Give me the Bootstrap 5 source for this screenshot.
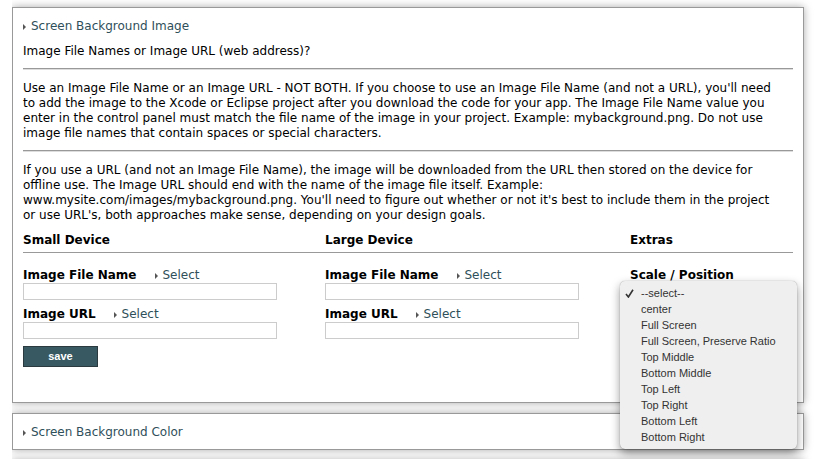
<!DOCTYPE html>
<html lang="en">
<head>
<meta charset="utf-8">
<meta name="viewport" content="width=device-width, initial-scale=1">
<title>Screen Background</title>
<link href="https://cdn.jsdelivr.net/npm/bootstrap@5.3.0/dist/css/bootstrap.min.css" rel="stylesheet">
<style>
body { font-family: "DejaVu Sans", Verdana, sans-serif; font-size: 12px; line-height: 15px; color: #000; background: #fff; }
.page { margin-left: 12px; padding: 7px 12px 0 0; overflow: hidden; height: 100vh; }
.panel { background: #fff; border: 1px solid #999; box-shadow: 0 0 8px #aaa; padding: 11px 10px 9px; margin-bottom: 10px; }
.panel-main { padding-bottom: 35px; }
.toggle { color: #2f4f5a; text-decoration: none; display: inline-flex; align-items: center; gap: 5px; }
.toggle:hover { text-decoration: underline; }
.toggle svg { width: 3px; height: 6px; fill: #555; margin-top: 1px; }
.title-row { margin-bottom: 10px; }
.rule { border: 0; border-top: 1px solid #999; border-bottom: 1px solid #ddd; opacity: 1; height: 2px; background: none; margin: 9px 0 11px; }
.device-grid { display: grid; grid-template-columns: 302fr 305fr 163fr; }
.heads { border-bottom: 1px solid #999; padding-bottom: 4px; margin: 10px 0 15px; }
.field-head { gap: 18px; }
.text-field { display: block; width: 254px; height: 17px; border: 1px solid #ccc; padding: 0 3px; background: #fff; }
.field { margin-bottom: 7px; }
.save { width: 75px; height: 21px; padding: 0; border: 1px solid #2b3a3f; border-radius: 0; background: #395962; color: #fff; font: bold 11px/19px "Liberation Sans", Arial, sans-serif; }
.save:hover { background: #2f4f5a; color: #fff; }
.scale-select { display: block; width: 150px; height: 18px; font-size: 11px; }
.options { position: absolute; z-index: 5; top: 13px; left: -10px; width: 177px; padding: 4px 0; background: #efefef; border-radius: 5px; box-shadow: 0 0 1px rgba(0,0,0,.4), 0 4px 10px rgba(0,0,0,.4); font: 11px/16px "Liberation Sans", Arial, sans-serif; }
.options button { display: block; position: relative; width: 100%; padding: 0 0 0 21px; border: 0; background: none; color: #333; text-align: left; line-height: 16px; }
.options svg { position: absolute; left: 5px; top: 4px; width: 9px; height: 9px; }
</style>
</head>
<body>
<main class="page">
  <section class="panel panel-main position-relative z-1">
    <div class="title-row"><a class="toggle" href="#image"><svg viewBox="0 0 3 6" aria-hidden="true"><path d="M0 0L3 3L0 6Z"/></svg>Screen Background Image</a></div>
    <p class="m-0">Image File Names or Image URL (web address)?</p>
    <hr class="rule">
    <p class="m-0">Use an Image File Name or an Image URL - NOT BOTH. If you choose to use an Image File Name (and not a URL), you'll need<br>to add the image to the Xcode or Eclipse project after you download the code for your app. The Image File Name value you<br>enter in the control panel must match the file name of the image in your project. Example: mybackground.png. Do not use<br>image file names that contain spaces or special characters.</p>
    <hr class="rule">
    <p class="m-0">If you use a URL (and not an Image File Name), the image will be downloaded from the URL then stored on the device for<br>offline use. The Image URL should end with the name of the image file itself. Example:<br>www.mysite.com/images/mybackground.png. You'll need to figure out whether or not it's best to include them in the project<br>or use URL's, both approaches make sense, depending on your design goals.</p>
    <form>
      <div class="device-grid heads fw-bold">
        <div>Small Device</div><div>Large Device</div><div>Extras</div>
      </div>
      <div class="device-grid">
        <div>
          <div class="field">
            <div class="d-flex field-head"><label class="fw-bold" for="sf">Image File Name</label><a class="toggle" href="#sf"><svg viewBox="0 0 3 6" aria-hidden="true"><path d="M0 0L3 3L0 6Z"/></svg>Select</a></div>
            <input class="text-field" id="sf" type="text">
          </div>
          <div class="field">
            <div class="d-flex field-head"><label class="fw-bold" for="su">Image URL</label><a class="toggle" href="#su"><svg viewBox="0 0 3 6" aria-hidden="true"><path d="M0 0L3 3L0 6Z"/></svg>Select</a></div>
            <input class="text-field" id="su" type="text">
          </div>
          <button class="btn save" type="button">save</button>
        </div>
        <div>
          <div class="field">
            <div class="d-flex field-head"><label class="fw-bold" for="lf">Image File Name</label><a class="toggle" href="#lf"><svg viewBox="0 0 3 6" aria-hidden="true"><path d="M0 0L3 3L0 6Z"/></svg>Select</a></div>
            <input class="text-field" id="lf" type="text">
          </div>
          <div class="field">
            <div class="d-flex field-head"><label class="fw-bold" for="lu">Image URL</label><a class="toggle" href="#lu"><svg viewBox="0 0 3 6" aria-hidden="true"><path d="M0 0L3 3L0 6Z"/></svg>Select</a></div>
            <input class="text-field" id="lu" type="text">
          </div>
        </div>
        <div class="position-relative">
          <label class="fw-bold d-block" for="scale">Scale / Position</label>
          <select class="scale-select" id="scale"><option></option></select>
          <div class="options" role="listbox" aria-label="Scale / Position">
            <button type="button" role="option" aria-selected="true"><svg viewBox="0 0 9 9" aria-hidden="true"><path d="M1 5L3.4 8L8 .8" fill="none" stroke="#333" stroke-width="1.6"/></svg>--select--</button>
            <button type="button" role="option">center</button>
            <button type="button" role="option">Full Screen</button>
            <button type="button" role="option">Full Screen, Preserve Ratio</button>
            <button type="button" role="option">Top Middle</button>
            <button type="button" role="option">Bottom Middle</button>
            <button type="button" role="option">Top Left</button>
            <button type="button" role="option">Top Right</button>
            <button type="button" role="option">Bottom Left</button>
            <button type="button" role="option">Bottom Right</button>
          </div>
        </div>
      </div>
    </form>
  </section>
  <section class="panel"><a class="toggle" href="#color"><svg viewBox="0 0 3 6" aria-hidden="true"><path d="M0 0L3 3L0 6Z"/></svg>Screen Background Color</a></section>
  <section class="panel"></section>
</main>
<script src="https://cdn.jsdelivr.net/npm/bootstrap@5.3.0/dist/js/bootstrap.bundle.min.js"></script>
</body>
</html>
